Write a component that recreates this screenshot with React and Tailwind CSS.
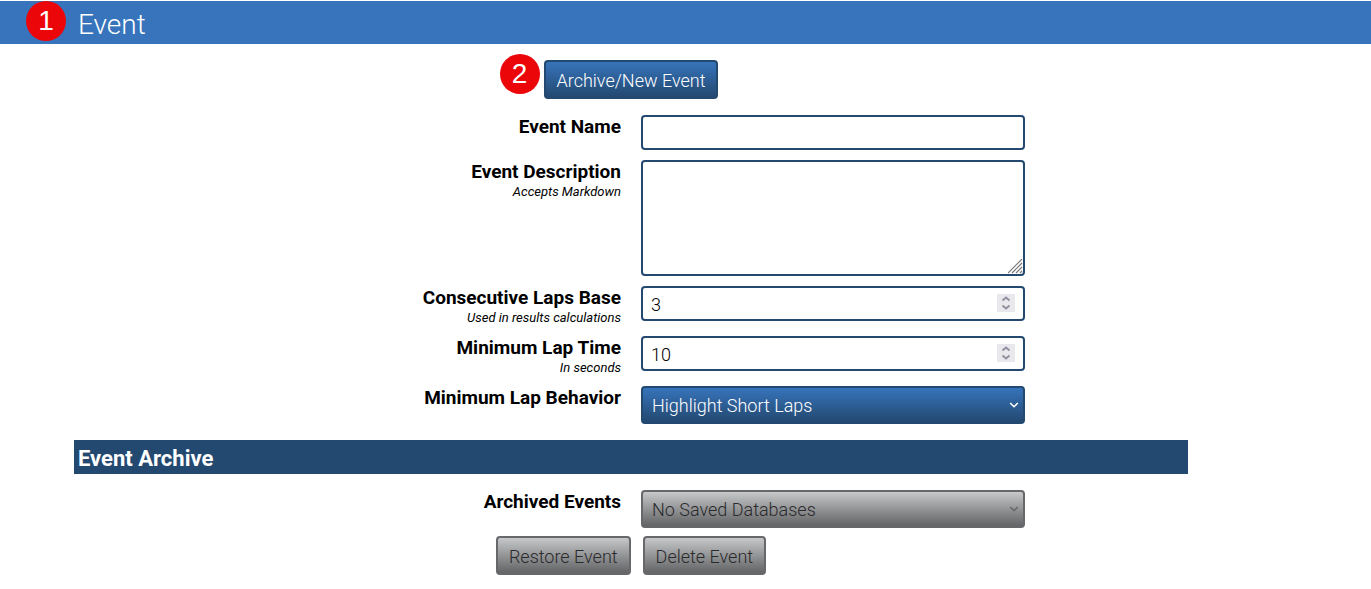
import React from 'react';

const field =
  'block w-full rounded-[4px] border-2 border-[#234971] bg-white px-2 pt-[2px] text-[18px] font-light text-black';
const blueFace = 'border-[#234971] bg-linear-to-b from-[#3774bb] to-[#234971] text-white';
const greyFace = 'border-[#68686c] bg-linear-to-b from-[#c7c8ca] to-[#636466] text-[#2a2a2c]';
const button = 'h-[39px] rounded-[4px] border-2 px-[11px] pt-[2px] text-[18px] font-light whitespace-nowrap';

function Badge({ children, className }) {
  return (
    <span
      className={`absolute flex size-10 items-center justify-center rounded-full bg-[#eb0609] font-['Liberation_Sans',sans-serif] text-[28px] leading-none text-white ${className}`}
    >
      {children}
    </span>
  );
}

function Row({ id, label, hint, children }) {
  return (
    <div className="grid grid-cols-2 gap-5">
      <div className="text-right">
        <label htmlFor={id} className="block text-[19px] leading-6 font-bold">
          {label}
        </label>
        {hint && <p className="text-[13px] leading-4 italic">{hint}</p>}
      </div>
      <div className="w-full max-w-96">{children}</div>
    </div>
  );
}

function NumberField({ id, value }) {
  return (
    <div className="relative">
      <input
        id={id}
        type="number"
        defaultValue={value}
        className={`${field} h-[35px] [appearance:textfield] [&::-webkit-inner-spin-button]:appearance-none`}
      />
      <svg viewBox="0 0 18 18" className="pointer-events-none absolute top-2 right-[10px] size-[18px]" aria-hidden="true">
        <rect width="18" height="18" fill="#e9e9ed" />
        <path d="M5.5 6.5 9 3.500l3.5 3M5.5 11.5l3.5 3 3.5-3" fill="none" stroke="#8f8f9d" strokeWidth="1.8" />
      </svg>
    </div>
  );
}

function SelectField({ id, option, face, arrow, disabled }) {
  return (
    <div className="relative">
      <select
        id={id}
        disabled={disabled}
        className={`block h-[38px] w-full appearance-none rounded-[4px] border-2 px-[9px] text-[18px] font-light opacity-100 ${face}`}
      >
        <option>{option}</option>
      </select>
      <svg viewBox="0 0 10 6" className={`pointer-events-none absolute top-4 right-[6px] h-[6px] w-[10px] ${arrow}`} aria-hidden="true">
        <path d="M1.2 1 5 4.700 8.800 1" fill="none" stroke="currentColor" strokeWidth="1.6" />
      </svg>
    </div>
  );
}

export default function App() {
  return (
    <main className="bg-white pt-px pb-[14px] font-['Roboto',sans-serif] text-black">
      <header className="relative flex h-[43px] items-center bg-[#3774bb] pl-[78px]">
        <Badge className="top-0 left-[26px]">1</Badge>
        <h1 className="pt-1 text-[28px] leading-none font-light text-white">Event</h1>
      </header>

      <div className="mr-[183px] ml-[74px] pt-4">
        <div className="flex justify-center">
          <div className="relative">
            <Badge className="-top-[6px] -left-11">2</Badge>
            <button type="button" className={`${button} ${blueFace}`}>
              Archive/New Event
            </button>
          </div>
        </div>

        <form className="mt-4 flex flex-col gap-[10px]">
          <Row id="event-name" label="Event Name">
            <input id="event-name" type="text" className={`${field} h-[35px]`} />
          </Row>
          <Row id="event-description" label="Event Description" hint="Accepts Markdown">
            <div className="relative">
              <textarea id="event-description" className={`${field} h-[116px] resize-none`} />
              <svg viewBox="0 0 15 15" className="pointer-events-none absolute right-[2px] bottom-[2px] size-[15px]" aria-hidden="true">
                <path d="M0 14 14 0M4 14 14 4M8 14l6-6M12 14l2-2" fill="none" stroke="#77777b" strokeWidth="1.2" />
              </svg>
            </div>
          </Row>
          <Row id="laps-base" label="Consecutive Laps Base" hint="Used in results calculations">
            <NumberField id="laps-base" value={3} />
          </Row>
          <Row id="lap-time" label="Minimum Lap Time" hint="In seconds">
            <NumberField id="lap-time" value={10} />
          </Row>
          <Row id="lap-behavior" label="Minimum Lap Behavior">
            <SelectField id="lap-behavior" option="Highlight Short Laps" face={blueFace} arrow="text-white" />
          </Row>
        </form>

        <h2 className="mt-4 flex h-[34px] items-center bg-[#234971] px-1 pt-1 text-[22px] leading-none font-bold text-white">
          Event Archive
        </h2>

        <div className="mt-4">
          <Row id="archived-events" label="Archived Events">
            <SelectField id="archived-events" option="No Saved Databases" face={greyFace} arrow="text-[#68686c]" disabled />
          </Row>
        </div>
        <div className="mt-2 flex justify-center gap-3">
          <button type="button" disabled className={`${button} ${greyFace}`}>
            Restore Event
          </button>
          <button type="button" disabled className={`${button} ${greyFace}`}>
            Delete Event
          </button>
        </div>
      </div>
    </main>
  );
}
